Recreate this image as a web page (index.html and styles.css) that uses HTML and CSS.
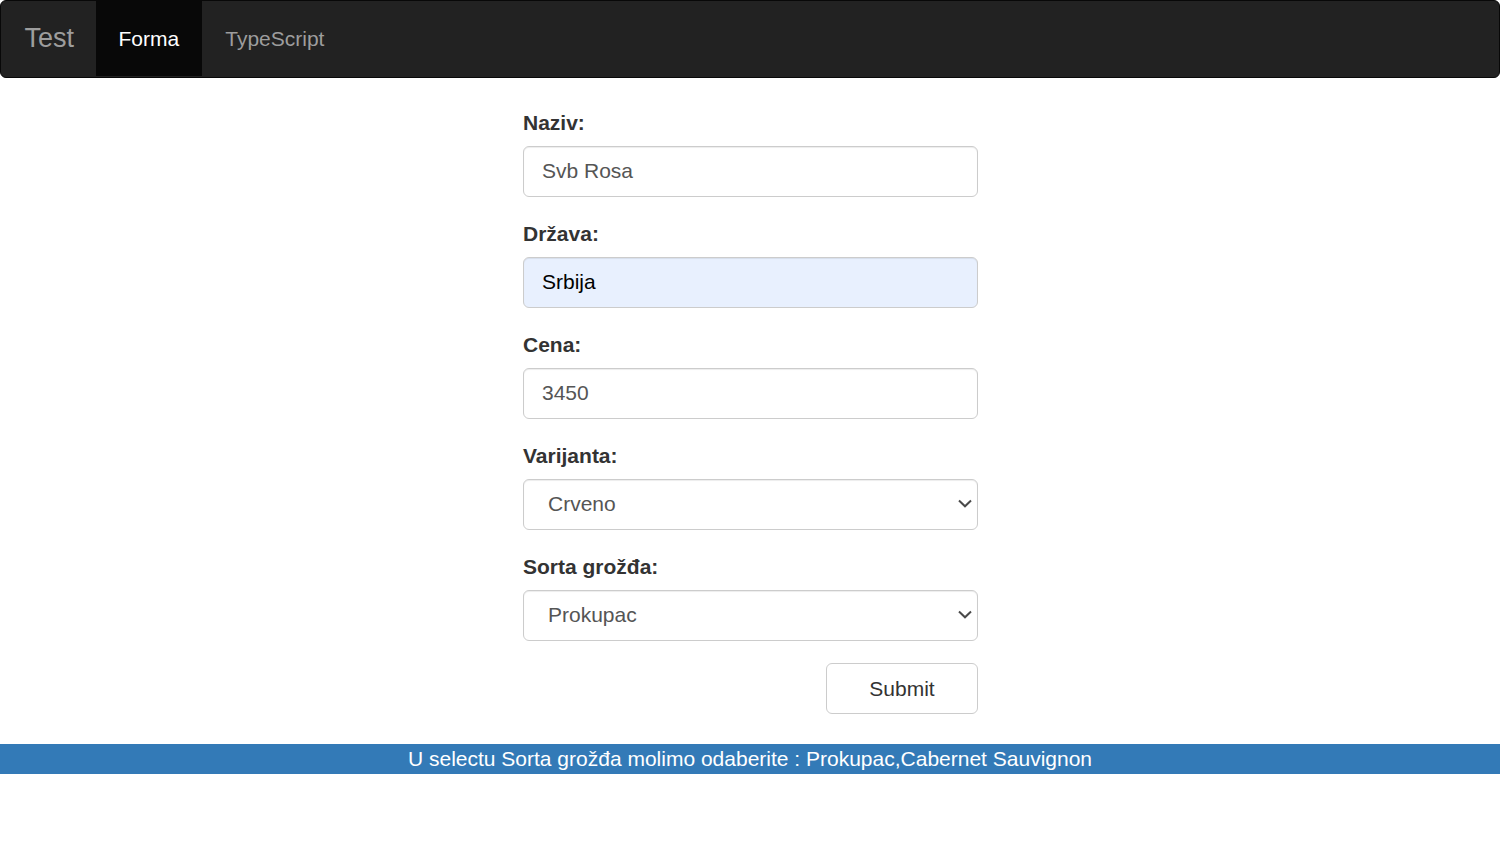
FILE: index.html
```html
<!DOCTYPE html>
<html>
<head>
<meta charset="utf-8">
<title>Forma</title>
<link rel="stylesheet" href="styles.css">
</head>
<body>
<nav class="navbar">
  <a class="brand" href="#">Test</a>
  <ul class="nav">
    <li class="active"><a href="#">Forma</a></li>
    <li><a href="#">TypeScript</a></li>
  </ul>
</nav>
<main class="content">
  <form class="form">
    <div class="form-group">
      <label class="label">Naziv:</label>
      <input class="control" type="text" value="Svb Rosa">
    </div>
    <div class="form-group">
      <label class="label">Država:</label>
      <input class="control autofill" type="text" value="Srbija">
    </div>
    <div class="form-group">
      <label class="label">Cena:</label>
      <input class="control" type="text" value="3450">
    </div>
    <div class="form-group">
      <label class="label">Varijanta:</label>
      <div class="select-wrap">
        <select class="control select"><option>Crveno</option></select>
        <svg class="chevron" width="14" height="9" viewBox="0 0 14 9"><path d="M1 1.5 L7 7.3 L13 1.5" fill="none" stroke="#4a4a4a" stroke-width="2"/></svg>
      </div>
    </div>
    <div class="form-group">
      <label class="label">Sorta grožđa:</label>
      <div class="select-wrap">
        <select class="control select"><option>Prokupac</option></select>
        <svg class="chevron" width="14" height="9" viewBox="0 0 14 9"><path d="M1 1.5 L7 7.3 L13 1.5" fill="none" stroke="#4a4a4a" stroke-width="2"/></svg>
      </div>
    </div>
    <div class="actions">
      <button class="btn" type="button">Submit</button>
    </div>
  </form>
</main>
<div class="alert">U selectu Sorta grožđa molimo odaberite : Prokupac,Cabernet Sauvignon</div>
</body>
</html>
```
FILE: styles.css
```css
* { box-sizing: border-box; }
html, body { margin: 0; padding: 0; }
body {
  font-family: "Liberation Sans", Arial, sans-serif;
  font-size: 21px;
  line-height: 30px;
  color: #333;
  background: #fff;
}
.navbar {
  display: flex;
  align-items: stretch;
  height: 78px;
  background: #222;
  border: 1.5px solid #080808;
  border-radius: 6px;
}
.brand {
  display: block;
  padding: 0 21.5px 0 23.5px;
  font-size: 27px;
  line-height: 75px;
  color: #9d9d9d;
  text-decoration: none;
}
.nav {
  display: flex;
  list-style: none;
  margin: 0;
  padding: 0;
}
.nav li a {
  display: block;
  padding: 0 23px;
  line-height: 75px;
  font-size: 21px;
  color: #9d9d9d;
  text-decoration: none;
}
.nav li.active a {
  background: #080808;
  color: #fff;
}
.content {
  display: flex;
  justify-content: center;
  padding-top: 30px;
}
.form {
  width: 455px;
  margin-left: 1px;
}
.form-group {
  margin-bottom: 22.5px;
}
.label {
  display: block;
  font-weight: bold;
  margin-bottom: 7.5px;
  color: #333;
}
.control {
  display: block;
  width: 100%;
  height: 51px;
  padding: 9px 18px;
  font-family: inherit;
  font-size: 21px;
  line-height: 30px;
  color: #555;
  background: #fff;
  border: 1.5px solid #ccc;
  border-radius: 6px;
  box-shadow: inset 0 1px 1px rgba(0,0,0,0.075);
  outline: none;
}
.autofill {
  background: #e8f0fe;
  color: #000;
}
.select-wrap {
  position: relative;
}
.select {
  appearance: none;
  -webkit-appearance: none;
  padding-left: 24px;
}
.chevron {
  position: absolute;
  right: 6px;
  top: 20.5px;
  pointer-events: none;
}
.actions {
  display: flex;
  justify-content: flex-end;
}
.btn {
  width: 152px;
  height: 51px;
  font-family: inherit;
  font-size: 21px;
  color: #333;
  background: #fff;
  border: 1.5px solid #ccc;
  border-radius: 6px;
}
.alert {
  margin-top: 30px;
  height: 30px;
  line-height: 30px;
  background: #337ab7;
  color: #fff;
  text-align: center;
  font-size: 21px;
}
```
